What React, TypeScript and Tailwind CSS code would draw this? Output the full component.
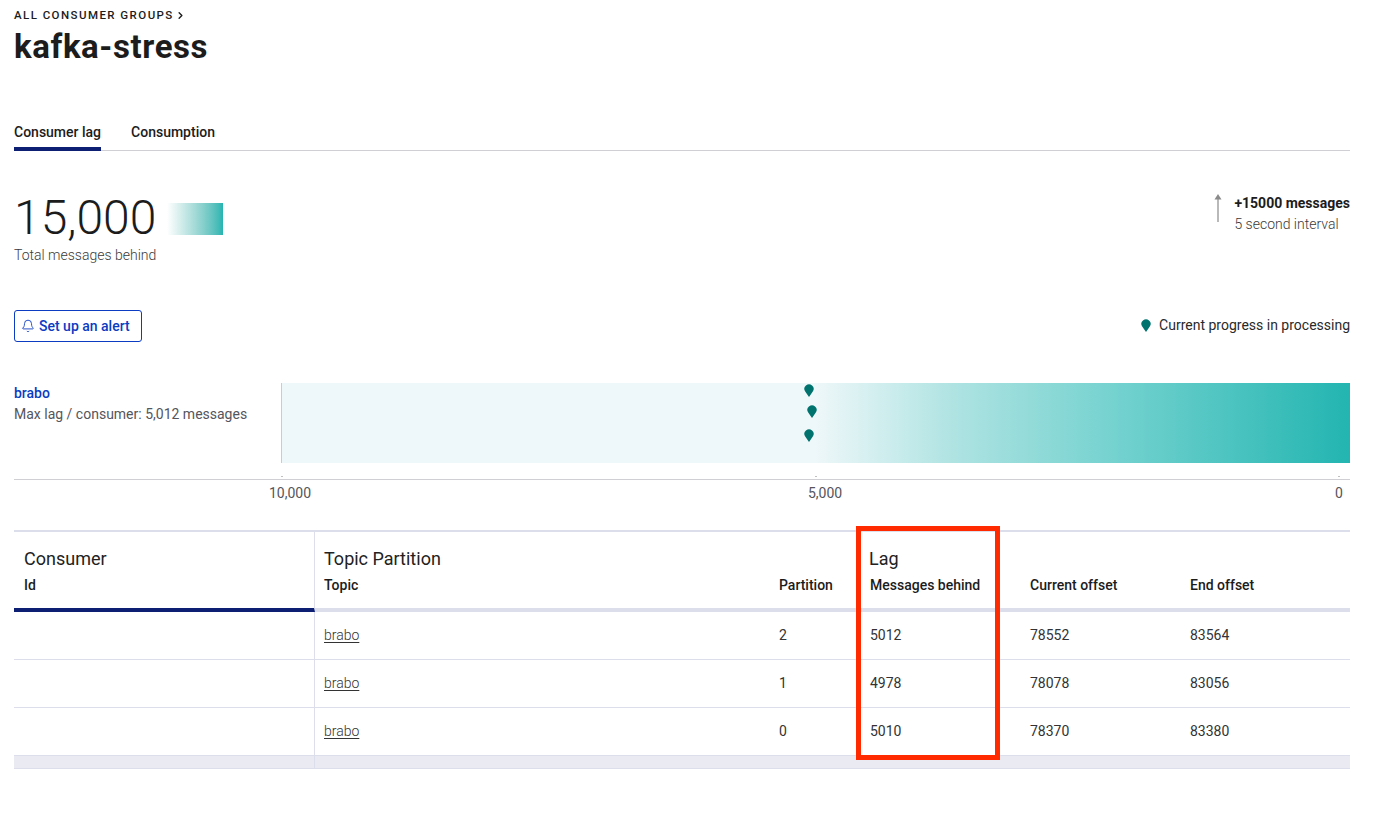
import { Bell, ChevronRight } from "lucide-react";

const rows = [
  { topic: "brabo", partition: 2, lag: 5012, current: 78552, end: 83564 },
  { topic: "brabo", partition: 1, lag: 4978, current: 78078, end: 83056 },
  { topic: "brabo", partition: 0, lag: 5010, current: 78370, end: 83380 },
];

const cols = "grid grid-cols-[301px_454px_91px_160px_160px_170px]";

function Pin({ className }: { className: string }) {
  return (
    <svg viewBox="0 0 10 13" className={`w-[10px] h-[13px] ${className}`}>
      <path d="M5 13 L1.2 7.6 A4.6 4.6 0 1 1 8.8 7.6 Z" fill="#00736f" />
    </svg>
  );
}

export default function App() {
  return (
    <div className="w-[1388px] h-[813px] bg-white px-[14px] text-[#1c1c1c] overflow-hidden font-['Roboto',sans-serif]">
      <div className="w-[1336px]">
        <div className="pt-[8px] h-[22px] flex items-center gap-[1px] text-[11.5px] font-medium tracking-[0.125em] leading-[14px]">
          ALL CONSUMER GROUPS
          <ChevronRight size={11} strokeWidth={3} />
        </div>
        <h1 className="mt-[4px] text-[33px] leading-[42px] font-bold tracking-[0.018em]">kafka-stress</h1>

        <div className="mt-[54px] h-[29px] flex gap-[30px] border-b border-[#cfcfd4] text-[14px] font-medium leading-[18px]">
          <div className="h-[29px] pt-[1px] border-b-[4px] border-[#0d1f73]">Consumer lag</div>
          <div className="pt-[1px]">Consumption</div>
        </div>

        <div className="mt-[38px] h-[80px] flex justify-between">
          <div className="pt-[1px]">
            <div className="flex items-center gap-[11px]">
              <span className="text-[48px] leading-[56px] font-light">15,000</span>
              <div className="mt-[2px] w-[56px] h-[32px] bg-gradient-to-r from-white to-[#23b5b1]" />
            </div>
            <div className="text-[14px] leading-[18px] font-light text-[#3a3a3a]">Total messages behind</div>
          </div>
          <div className="flex gap-[11px] pt-[4px]">
            <svg viewBox="0 0 10 28" className="w-[10px] h-[28px] mt-[1px]">
              <path d="M5 28 V4" stroke="#8a8a8a" strokeWidth="1.2" fill="none" />
              <path d="M5 0 L8.5 5.5 H1.5 Z" fill="#8a8a8a" />
            </svg>
            <div>
              <div className="text-[14px] leading-[21px] font-bold">+15000 messages</div>
              <div className="text-[14px] leading-[21px] font-light text-[#3a3a3a]">5 second interval</div>
            </div>
          </div>
        </div>

        <div className="mt-[41px] h-[32px] flex items-center justify-between">
          <button className="w-[128px] h-[32px] flex items-center gap-[4px] pl-[6px] rounded-[3px] border border-[#0b3cc1] text-[#0b3cc1] text-[14px] font-medium">
            <Bell size={14} strokeWidth={1.5} />
            Set up an alert
          </button>
          <div className="flex items-center gap-[8px] pb-[2px] text-[14px] text-[#2a2a2a]">
            <Pin className="" />
            Current progress in processing
          </div>
        </div>

        <div className="mt-[41px] flex">
          <div className="w-[267px] pt-[2px]">
            <div className="text-[14px] leading-[16px] font-medium text-[#0b3cc1]">brabo</div>
            <div className="mt-[5px] text-[14px] leading-[16px] text-[#55555c]">Max lag / consumer: 5,012 messages</div>
          </div>
          <div className="relative w-[1069px] h-[80px] border-l border-[#c9cdd0] bg-[linear-gradient(to_right,#eef7f9_0%,#eef7f9_50%,#aee3e2_63%,#74d2cf_78%,#23b5b1_100%)]">
            <Pin className="absolute left-[522px] top-[1px]" />
            <Pin className="absolute left-[525px] top-[22px]" />
            <Pin className="absolute left-[522px] top-[46px]" />
          </div>
        </div>

        <div className="relative h-[17px] border-b border-[#cfcfd4]">
          <span className="absolute left-[267px] top-[13px] w-[2px] h-[1px] bg-[#c0c0c0]" />
          <span className="absolute left-[801px] top-[13px] w-[2px] h-[1px] bg-[#c0c0c0]" />
          <span className="absolute left-[1324px] top-[13px] w-[2px] h-[1px] bg-[#c0c0c0]" />
        </div>
        <div className="relative h-[26px] text-[14px] leading-[26px] text-[#55555c]">
          <span className="absolute left-[255px]">10,000</span>
          <span className="absolute left-[794px]">5,000</span>
          <span className="absolute left-[1321px]">0</span>
        </div>

        <div className="relative mt-[24px]">
          <div className="border-t-[2px] border-[#dcdeec]">
            <div className={`${cols} h-[80px]`}>
              <div className="pl-[10px] pt-[16px] border-r border-[#dcdeec] border-b-[4px] border-b-[#0d1f73]">
                <div className="text-[18px] leading-[22px] text-[#222]">Consumer</div>
                <div className="mt-[6px] text-[14px] leading-[18px] font-medium">Id</div>
              </div>
              <div className="pl-[9px] pt-[16px] border-b-[4px] border-[#dcdeec]">
                <div className="text-[18px] leading-[22px] text-[#222]">Topic Partition</div>
                <div className="mt-[6px] text-[14px] leading-[18px] font-medium">Topic</div>
              </div>
              <div className="pl-[10px] pt-[44px] border-b-[4px] border-[#dcdeec] text-[14px] leading-[18px] font-medium">Partition</div>
              <div className="pl-[10px] pt-[16px] border-b-[4px] border-[#dcdeec]">
                <div className="-ml-px text-[18px] leading-[22px] text-[#222]">Lag</div>
                <div className="mt-[6px] text-[14px] leading-[18px] font-medium">Messages behind</div>
              </div>
              <div className="pl-[10px] pt-[44px] border-b-[4px] border-[#dcdeec] text-[14px] leading-[18px] font-medium">Current offset</div>
              <div className="pl-[10px] pt-[44px] border-b-[4px] border-[#dcdeec] text-[14px] leading-[18px] font-medium">End offset</div>
            </div>
            {rows.map((row) => (
              <div key={row.partition} className={`${cols} h-[48px] border-b border-[#dcdeec] text-[14px] text-[#333]`}>
                <div className="border-r border-[#dcdeec]" />
                <div className="pl-[9px] flex items-center font-light"><span className="underline underline-offset-2">{row.topic}</span></div>
                <div className="pl-[10px] flex items-center">{row.partition}</div>
                <div className="pl-[10px] flex items-center">{row.lag}</div>
                <div className="pl-[10px] flex items-center">{row.current}</div>
                <div className="pl-[10px] flex items-center">{row.end}</div>
              </div>
            ))}
            <div className={`${cols} h-[13px] bg-[#e9eaf2] border-b border-[#dcdeec]`}>
              <div className="border-r border-[#dcdeec]" />
            </div>
          </div>
          <div className="absolute left-[842px] -top-[4px] w-[144px] h-[234px] border-[5px] border-[#ff2a00]" />
        </div>
      </div>
    </div>
  );
}
